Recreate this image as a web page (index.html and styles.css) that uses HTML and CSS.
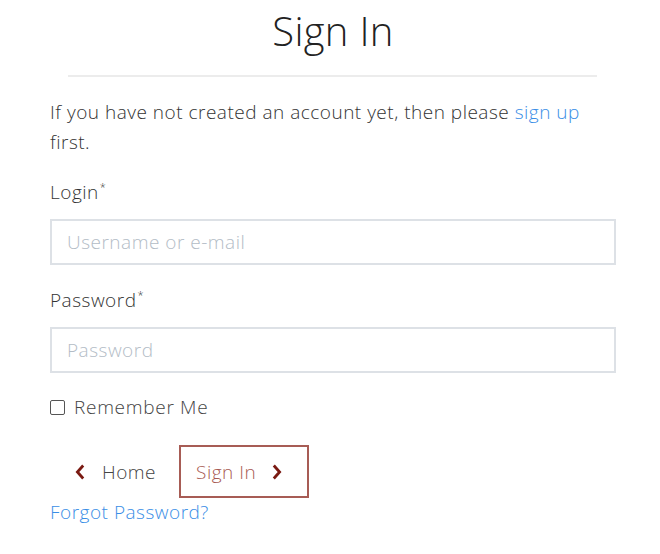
FILE: index.html
```html
<!DOCTYPE html>
<html>
<head>
<meta charset="utf-8">
<link rel="stylesheet" href="styles.css">
</head>
<body>
<div class="page">
  <h1 class="title">Sign In</h1>
  <hr class="rule">
  <p class="intro">If you have not created an account yet, then please <a class="link" href="#">sign up</a> first.</p>
  <form class="form">
    <label class="label" for="login">Login<sup class="req">*</sup></label>
    <input class="field" id="login" type="text" placeholder="Username or e-mail">
    <label class="label label-pw" for="pw">Password<sup class="req">*</sup></label>
    <input class="field" id="pw" type="password" placeholder="Password">
    <label class="remember"><span class="box"></span>Remember Me</label>
    <div class="actions">
      <a class="btn btn-home" href="#">
        <svg class="chev" width="10" height="16" viewBox="0 0 10 16"><path d="M8.2 1.5 L2.4 8 L8.2 14.5" fill="none" stroke="#7a1a12" stroke-width="2.8"/></svg>
        <span>Home</span>
      </a>
      <a class="btn btn-signin" href="#">
        <span>Sign In</span>
        <svg class="chev" width="10" height="16" viewBox="0 0 10 16"><path d="M1.8 1.5 L7.6 8 L1.8 14.5" fill="none" stroke="#7a1a12" stroke-width="2.8"/></svg>
      </a>
    </div>
    <a class="link forgot" href="#">Forgot Password?</a>
  </form>
</div>
</body>
</html>
```
FILE: styles.css
```css
html, body {
  margin: 0;
  padding: 0;
  background: #fff;
}
body {
  font-family: "Open Sans", "Liberation Sans", sans-serif;
  font-weight: 300;
  color: #333;
  letter-spacing: 0.5px;
}
.page {
  width: 566px;
  margin-left: 50px;
}
.title {
  margin: 0;
  padding-top: 5px;
  text-align: center;
  font-size: 40px;
  font-weight: 300;
  line-height: 52px;
  color: #222;
  letter-spacing: 0.3px;
}
.rule {
  margin: 18px 19px 0 18px;
  border: 0;
  height: 2px;
  background: #ececec;
}
.intro {
  margin: 20px 0 0 0;
  font-size: 19px;
  line-height: 30px;
  color: #333;
}
.link {
  color: #3a8ee6;
  text-decoration: none;
}
.form {
  display: flex;
  flex-direction: column;
  margin-top: 20px;
}
.label {
  font-size: 19px;
  line-height: 30px;
  color: #333;
}
.req {
  font-size: 11px;
  vertical-align: top;
  line-height: 20px;
  margin-left: 1px;
}
.label-pw {
  margin-top: 20px;
}
.field {
  margin-top: 12px;
  height: 46px;
  box-sizing: border-box;
  border: 2px solid #dde1e6;
  border-radius: 0;
  padding: 0 15px;
  font-family: inherit;
  font-weight: 300;
  font-size: 19px;
  letter-spacing: 0.5px;
  color: #333;
  outline: none;
}
.field::placeholder {
  color: #b3bcc6;
}
.remember {
  display: flex;
  align-items: center;
  gap: 9px;
  margin-top: 22px;
  font-size: 19px;
  line-height: 24px;
  color: #444;
  letter-spacing: 0.7px;
}
.box {
  width: 13px;
  height: 13px;
  border: 1.5px solid #555;
  border-radius: 2px;
}
.actions {
  display: flex;
  align-items: center;
  margin-top: 26px;
}
.btn {
  display: flex;
  align-items: center;
  box-sizing: border-box;
  height: 53px;
  font-size: 19px;
  text-decoration: none;
}
.btn-home {
  padding: 0 23px 0 25px;
  gap: 17px;
  color: #444;
}
.btn-signin {
  width: 130px;
  padding: 0 0 0 15px;
  gap: 16px;
  border: 2px solid #a75c55;
  color: #a85a52;
}
.forgot {
  margin-top: 1px;
  font-size: 19px;
  line-height: 26px;
  align-self: flex-start;
}
```
